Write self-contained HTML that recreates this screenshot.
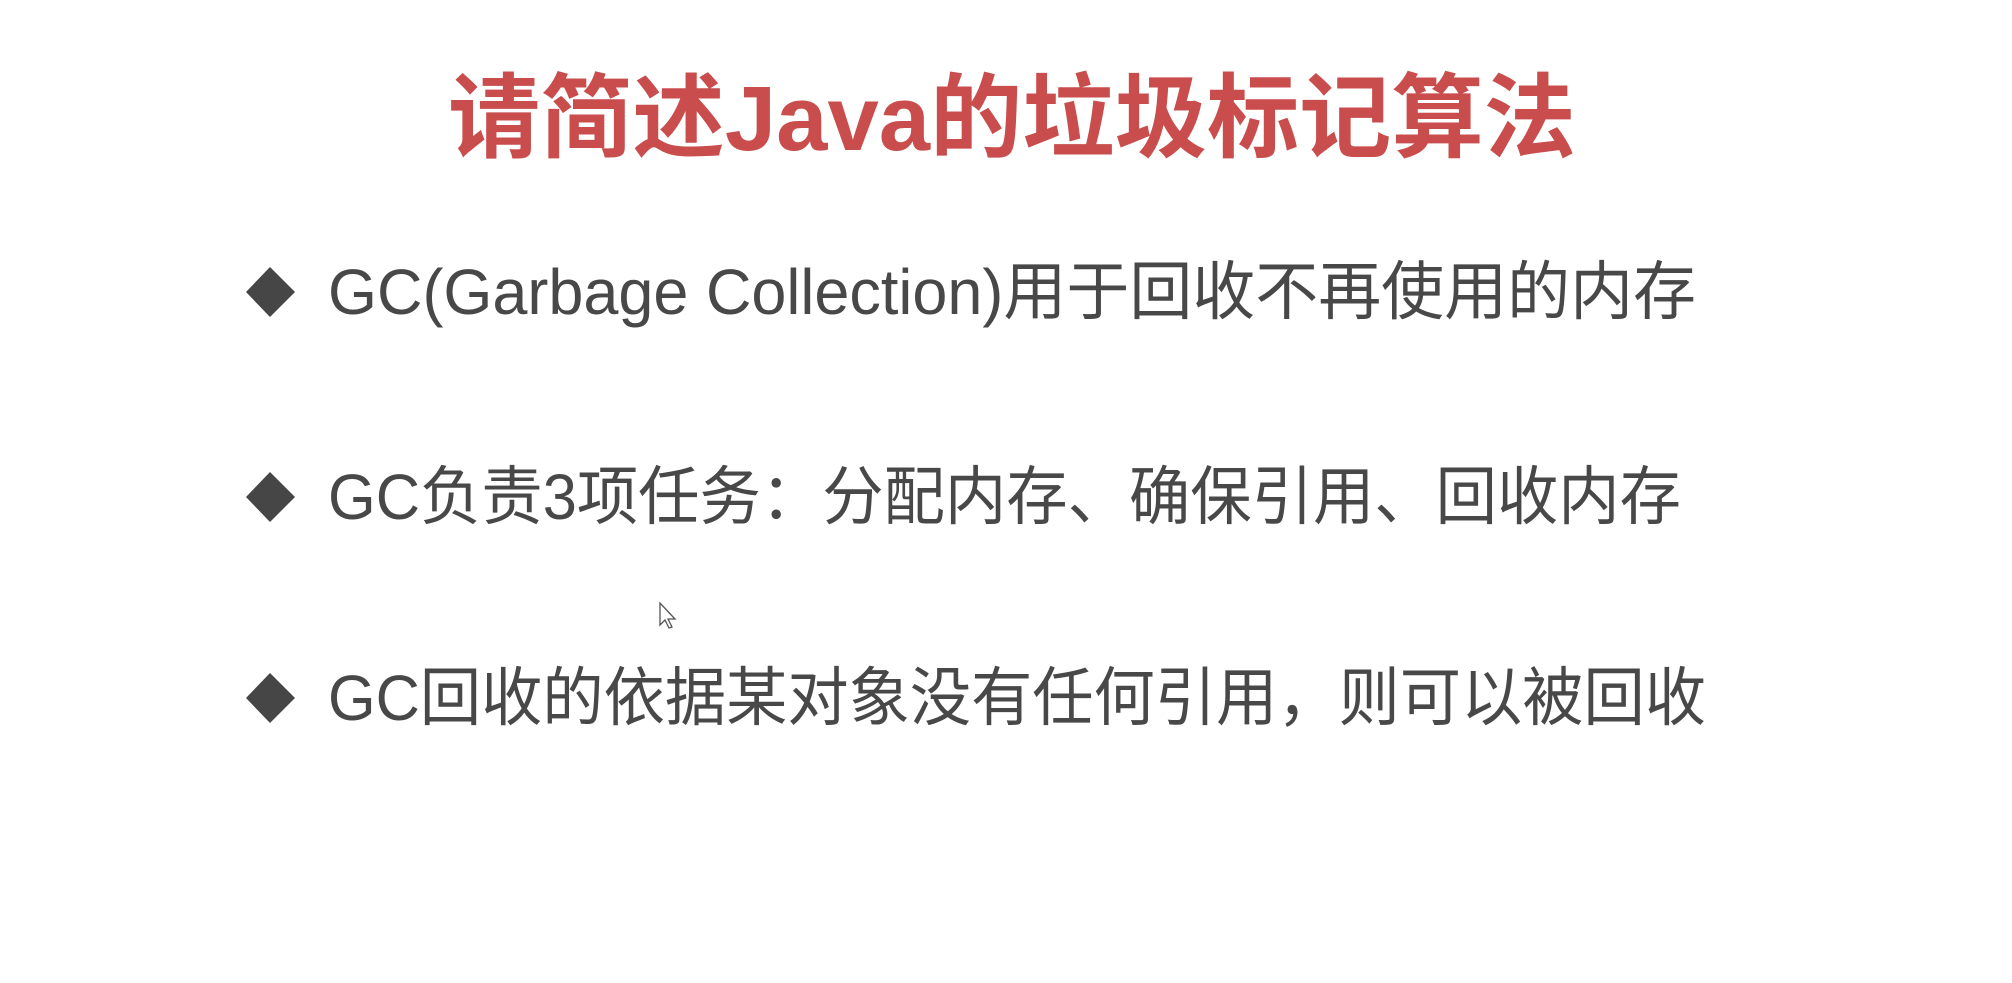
<!DOCTYPE html>
<html><head><meta charset="utf-8"><style>
html,body{margin:0;padding:0;background:#fff;width:2012px;height:983px;overflow:hidden}
</style></head><body>
<svg width="2012" height="983" xmlns="http://www.w3.org/2000/svg">
<text x="448" y="150" font-family="'Liberation Sans','Noto Sans CJK SC',sans-serif" font-weight="bold" font-size="92" fill="#c94d4d" textLength="1128" lengthAdjust="spacingAndGlyphs">请简述Java的垃圾标记算法</text>
<g fill="#464646">
<polygon points="270,267 295,292 270,317 246,292"/>
<polygon points="270,472 295,497 270,522 246,497"/>
<polygon points="270,673 295,698 270,723 246,698"/>
</g>
<g font-family="'Liberation Sans','Noto Sans CJK SC',sans-serif" font-size="64" fill="#484848">
<text x="328" y="314" textLength="1368" lengthAdjust="spacingAndGlyphs">GC(Garbage Collection)用于回收不再使用的内存</text>
<text x="328" y="519" textLength="1353" lengthAdjust="spacingAndGlyphs">GC负责3项任务：分配内存、确保引用、回收内存</text>
<text x="328" y="720" textLength="1378" lengthAdjust="spacingAndGlyphs">GC回收的依据某对象没有任何引用，则可以被回收</text>
</g>
<path d="M660,603 L660,625 L665,620 L669,628 L672,627 L668,619 L675,619 Z" fill="#fff" stroke="#555" stroke-width="1.3"/>
</svg>
</body></html>
